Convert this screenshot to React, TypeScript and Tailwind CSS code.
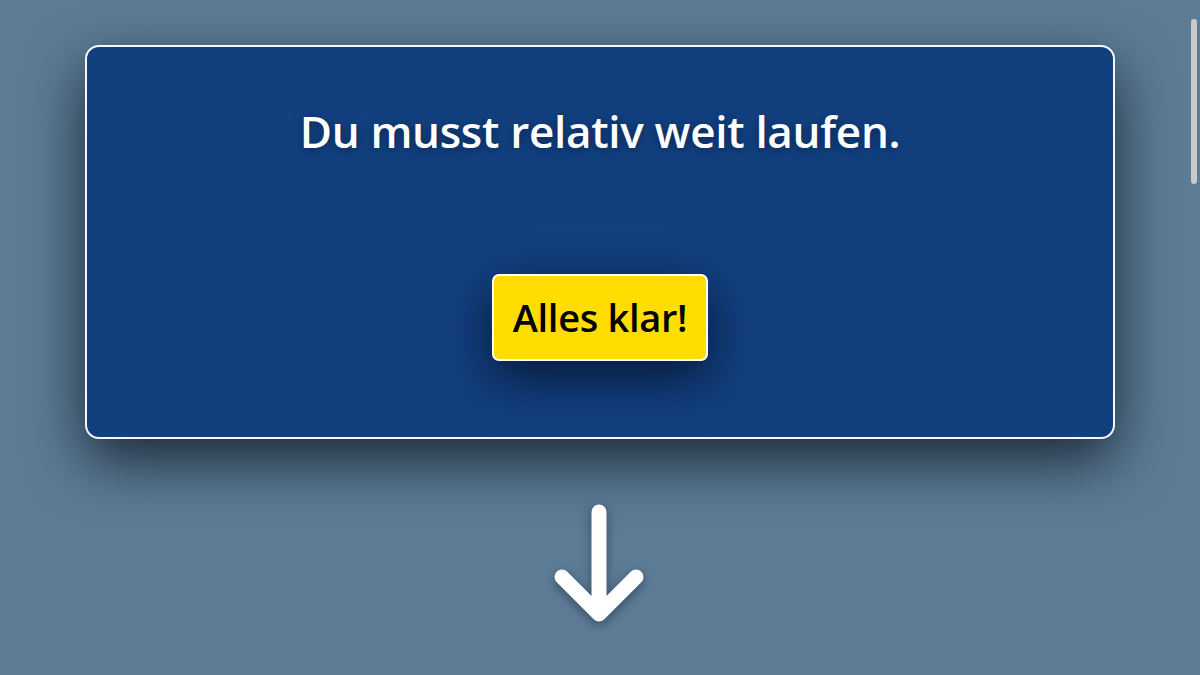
export default function App() {
  return (
    <div
      className="relative h-[675px] w-[1200px] overflow-hidden bg-[#5d7d96]"
      style={{ fontFamily: '"Open Sans", "Noto Sans", sans-serif' }}
    >
      <div className="flex flex-col items-center pt-[45px]">
        {/* hint card */}
        <div className="flex h-[394px] w-[1030px] flex-col items-center rounded-[14px] border-2 border-[#f4f6fa] bg-[#12407f] shadow-[0_22px_60px_rgba(15,25,40,0.85)]">
          <h1 className="mt-[62px] text-[44px] font-semibold leading-none tracking-[-0.3px] text-white [text-shadow:0_2px_10px_rgba(5,20,50,0.6)]">
            Du musst relativ weit laufen.
          </h1>
          <button className="mt-[121px] flex h-[87px] w-[216px] items-center justify-center rounded-[7px] border-2 border-white bg-[#ffdd00] text-[38px] font-semibold tracking-[-0.3px] text-black shadow-[0_16px_50px_rgba(5,15,40,0.85)]">
            Alles klar!
          </button>
        </div>

        {/* scroll-down arrow */}
        <svg
          width="110"
          height="136"
          viewBox="0 0 110 136"
          className="mt-[60px] drop-shadow-[0_3px_6px_rgba(20,35,55,0.55)]"
        >
          <path
            d="M54 13 V114 M17 78 L54 115 L91 78"
            stroke="white"
            strokeWidth="15"
            strokeLinecap="round"
            strokeLinejoin="round"
            fill="none"
          />
        </svg>
      </div>

      {/* scrollbar thumb */}
      <div className="absolute right-[3px] top-[19px] h-[165px] w-[6px] rounded-full bg-[#c9cbcd]" />
    </div>
  );
}
